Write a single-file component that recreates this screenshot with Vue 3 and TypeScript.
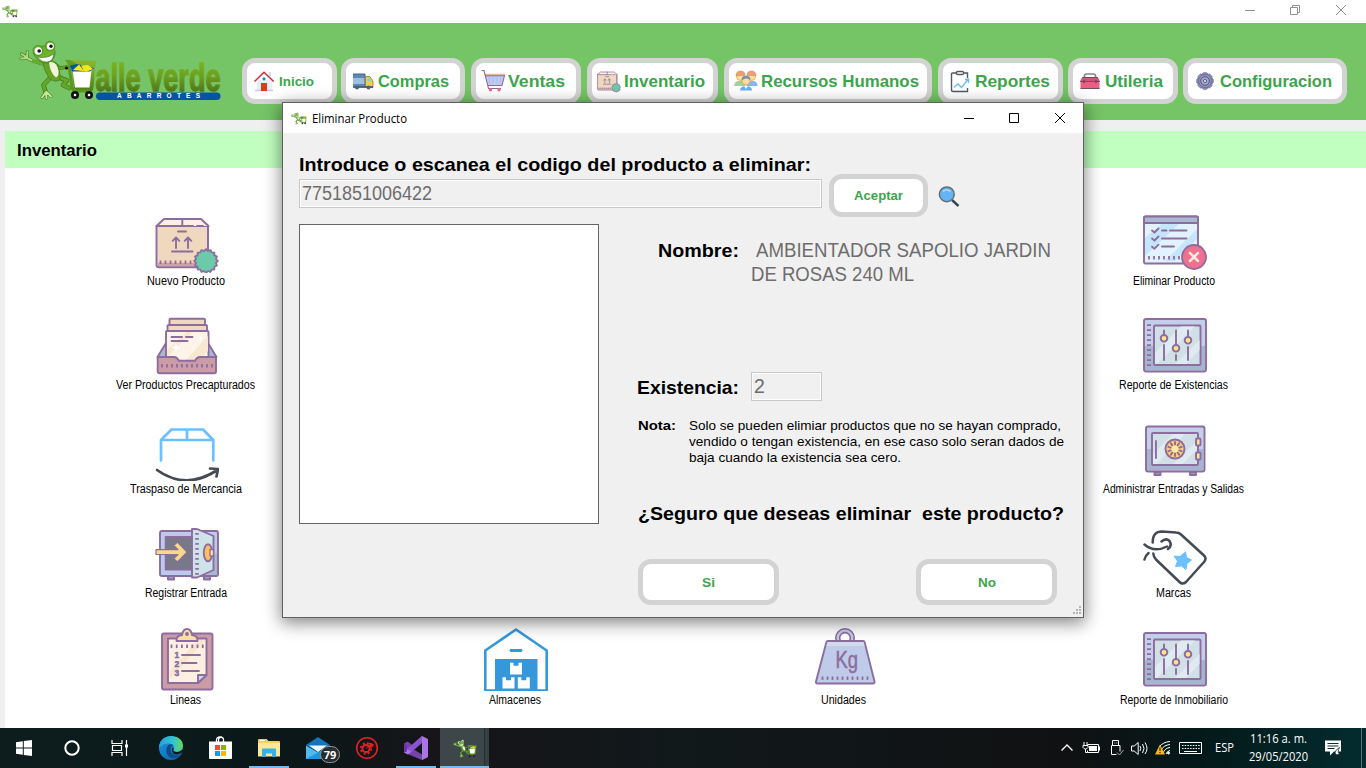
<script setup lang="ts">
interface NavItem { label: string; icon: string; width: number; gap: number; text: number; small?: boolean }
interface Tile { label: string; icon: string; row: number; col: number; text: number }

// Condenses or expands a line's letters so that it fills the given width in pixels.
const vFit = {
  mounted(el: HTMLElement, binding: { value: number }) {
    el.style.display = 'inline-block'
    const natural = el.getBoundingClientRect().width
    if (!natural) return
    el.style.transformOrigin = '0 50%'
    el.style.transform = `scaleX(${binding.value / natural})`
    el.style.marginRight = `${binding.value - natural}px`
  },
}

const P = '#8d6c9f'
const ticks = (x: number, y: number, n: number, step: number, h = 3.6) =>
  Array.from({ length: n }, (_, i) => `<path d="M${x + i * step} ${y}v${h}" stroke="${P}" stroke-width="1.8"/>`).join('')
const open = `<g stroke="${P}" stroke-width="1.9" stroke-linecap="round" stroke-linejoin="round" fill="none">`
const scallop = Array.from({ length: 32 }, (_, i) => {
  const r = i % 2 ? 10.2 : 11.8
  const a = (i * Math.PI) / 16
  return `${(51 + r * Math.cos(a)).toFixed(1)},${(52 + r * Math.sin(a)).toFixed(1)}`
}).join(' ')
const rays = Array.from({ length: 10 }, (_, i) => `<path d="M32 27.5v-2.500" transform="rotate(${i * 36} 32 32)"/>`).join('')
const teeth = Array.from({ length: 8 }, (_, i) => `<rect x="9.600" y="3.800" width="4.800" height="4.500" rx="1" transform="rotate(${i * 45} 12 12)"/>`).join('')

const icons: Record<string, string> = {
  box: `${open}<path d="M1.500 17V56q0 2.200 2.200 2.200H51q2 0 2-2V17z" fill="#efd8be"/><path d="M2.500 53.800H52V57H2.500z" fill="#d0a2a4" stroke="none"/><path d="M1.500 17 9 10H46l7.500 7z" fill="#fdf0e2" stroke="none"/><path d="M1.500 17 9 10H46l7.500 7M1.500 17H38M42 17h6M27.300 10v7M53 17v23M23 22.500h8M17 42.500h20.500M21 39V28.500l-3.300 3.300M21 28.500l3.300 3.300M33 39V28.500l-3.300 3.300M33 28.500l3.300 3.300"/></g>${ticks(5.500, 51.500, 7, 5)}<polygon points="${scallop}" fill="#6cc9a9" stroke="${P}" stroke-width="1.800"/>`,
  tray: `${open}<path d="M2.500 44 11 30V44zM61.500 44 53 30V44z" fill="#a9b9d3"/><path d="M14.500 12V6.800q0-1 1-1H49q1 0 1 1V12z" fill="#efd8be"/><path d="M12.500 18V13q0-1 1-1H51q1 0 1 1v5z" fill="#efd8be"/><path d="M11 48V19q0-1 1-1H52.500q1 0 1 1V48z" fill="#fdf3e8"/><path d="M31 47 53 23V38L44 47zM12 44V37L32 19h5z" fill="#f8e7d2" stroke="none"/><path d="M21 30l1.300 3.200 3.200 1.300-3.200 1.300L21 39l-1.300-3.200-3.200-1.300 3.200-1.300zM45.500 23l.8 2 2 .8-2 .8-.8 2-.8-2-2-.8 2-.8z" fill="#fff" stroke="none"/><path d="M2.700 44H19q3 0 5 3.800H40q2-3.800 5-3.800H61V58.500q0 1.800-1.800 1.800H4.500q-1.800 0-1.800-1.800z" fill="#cb9ca5"/><path d="M16.500 24h10.500M31 24h6.500M16.500 28h16"/></g>${ticks(7, 51, 11, 5)}`,
  transfer: `<g fill="none" stroke-width="2.700" stroke-linecap="round" stroke-linejoin="round"><path d="M6 43.500V23L16.500 12.500H48L58.300 23V43.500M6 23H58.300M32 13V23" stroke="#6cc0ff"/><path d="M2 53Q31 73.500 61.500 53.500M55 51.500 63 52 61.500 59.500" stroke="#444b54"/></g>`,
  entry: `${open}<path d="M13 55h6v3.500h-6zM49 55h6v3.500h-6z" fill="#8fa3bd"/><rect x="5" y="10" width="58" height="45" rx="2" fill="#bccbe9"/><path d="M59 34 62 32V54H45z" fill="#a6b8d2" stroke="none"/><rect x="10.700" y="16" width="29" height="32.500" fill="#777987"/><path d="M37 8h5L58.500 15V49L42 56.500h-5z" fill="#cfe2e9"/><ellipse cx="53" cy="31.700" rx="4.200" ry="8.500" fill="#ffc05f"/><rect x="55" y="28.500" width="3.500" height="6.500" fill="#ffe6a0" stroke-width="1.300"/><path d="M1 28.700H23L18.800 24.500 22.500 21 32 31.200 22.500 41 18.800 37.600 23 33.500H1z" fill="#f8d98a" stroke-width="1.200"/></g><path d="M42 12v42" stroke="${P}" stroke-width="3.500" stroke-dasharray="1.800 3.200"/>`,
  list: `${open}<rect x="7" y="6.500" width="50.500" height="56" rx="2" fill="#cb9ca5"/><path d="M13 11.500H51.500V48L43 56H13z" fill="#fdf0e2"/><path d="M14 45 43 13h7L15 52z" fill="#f8e5cf" stroke="none"/><path d="M43 56V48h8.500z" fill="#bdddf8"/><path d="M21.500 14q-.5-5.500 5.500-6 1-6 5-6t5 6q6 .5 5.500 6z" fill="#f9dfa0"/><circle cx="32" cy="7" r="1" fill="${P}"/><path d="M27 28H45M27 36H41.500M27 44H44"/></g>${ticks(16.500, 17.500, 7, 5.200)}<g fill="${P}" stroke="${P}" stroke-width=".5" font-family="Liberation Sans" font-weight="bold" font-size="8.500"><text x="19.500" y="30.800">1</text><text x="19.500" y="39.500">2</text><text x="19.500" y="48.500">3</text></g>`,
  remove: `${open}<rect x="1" y="7.500" width="54" height="47" rx="1.500" fill="#e2f3ff"/><path d="M2 29 20 14H37L2 47zM22 52 54 20v10L32 52z" fill="#c5e5fa" stroke="none"/><path d="M1 14V9q0-1.500 1.500-1.500h51q1.500 0 1.500 1.500v5z" fill="#a9b9cf"/><path d="M9 21.500l2.500 2 4-4M9 29.500l2.500 2 4-4M9 37.700l2.500 2 4-4M19 21.500h4.500M27 21.500H43.500M19 29.500H43.500M19 37.500H31"/></g>${ticks(6, 47, 7, 5)}<circle cx="51" cy="48" r="12" fill="#f0708f" stroke="${P}" stroke-width="1.800"/><path d="M47 44l8 8M55 44l-8 8" stroke="#ffe9dc" stroke-width="2.500" stroke-linecap="round"/>`,
  sliders: `${open}<rect x="1" y="6" width="62" height="52.500" rx="2" fill="#c3cfe9"/><path d="M2 33H62V57H2z" fill="#a6b5ce" stroke="none"/><rect x="11" y="12.500" width="46.500" height="39.500" rx="1" fill="#d1dfe7"/><path d="M12 40 38 13.500H52L14 51h-2zM32 51 56.500 27V37L43 51z" fill="#dfebf1" stroke="none"/><path d="M21 17.500v4M21 32V47M33 17.500V31M33 42v5M45 17.500v6M45 34V47"/><circle cx="21" cy="25.300" r="3.300" fill="#ffe18b"/><circle cx="33" cy="35.300" r="3.300" fill="#ffe18b"/><circle cx="45" cy="27.300" r="3.300" fill="#ffe18b"/></g><path d="M6 11.200V53.500" stroke="${P}" stroke-width="4" stroke-dasharray="1.900 3.100"/>`,
  safe: `${open}<path d="M11.500 55h6v3h-6zM47 55h6v3h-6z" fill="#8fa3bd"/><rect x="3" y="9.500" width="58.500" height="45" rx="2" fill="#c3cfe9"/><path d="M4 32H60V53H4z" fill="#a6b5ce" stroke="none"/><rect x="9" y="16" width="46" height="32" rx="1" fill="#d1dfe7"/><path d="M10 37 30 17H42L14 47h-4zM30 47 54 24v8L40 47z" fill="#dfebf1" stroke="none"/><path d="M13 24V41"/><circle cx="32" cy="32" r="9.500" fill="#ffcd72"/><circle cx="32" cy="32" r="4" fill="#ffe7a0" stroke="none"/>${rays}<rect x="53" y="21.500" width="4.500" height="7" rx="1" fill="#ffe18b"/><rect x="53" y="35.500" width="4.500" height="7" rx="1" fill="#ffe18b"/></g>`,
  tag: `<g fill="none" stroke="#444b54" stroke-width="2.500" stroke-linecap="round" stroke-linejoin="round"><path d="M9.700 21.500Q9.500 10.500 19 10.500L33 11.500Q36 11.500 38 13.500L61 34.500Q64 37.500 61 41L43 61Q39.500 64 36.500 61L13 38.500Q10.500 36 10.300 32.500"/><path d="M1.500 23.500Q11 32 24 25.500M18.500 20.500Q23 16.500 26.500 20 29.500 25 25 28M5.500 32Q2.500 34.500 1.500 38.500"/></g><path d="M42.500 31 43.500 36.500 48.500 39 44 42.500 43 48.500 38.500 45 32.500 45.500 34.500 40 31 35 37 35.500z" fill="#6cc0ff" stroke="#6cc0ff" stroke-linejoin="round"/>`,
  warehouse: `<path d="M1.300 23.500 32 2.500 62.700 23.500V63.500H1.300z" fill="#fff" stroke="#3498db" stroke-width="2.600" stroke-linejoin="round"/><path d="M27 23.500H37" stroke="#3498db" stroke-width="2.800" stroke-linecap="round"/><path d="M11 32H53.500V64H11z" fill="#3498db"/><path d="M26 35.800h3.500v3h5v-3H38V47.500H26zM18.500 50.200H22v3h5v-3h3.500V61.500h-12zM33.800 50.200h3.500v3h5v-3h3.500V61.500h-12z" fill="#fff"/>`,
  weight: `${open}<circle cx="32" cy="11" r="7.300" stroke-width="5.500"/><circle cx="32" cy="11" r="7.300" stroke="#c0cce8" stroke-width="2.300"/><path d="M15 14H50q1.300 0 1.700 1.500L61.500 54.500q.5 2-1.500 2H4.500q-2 0-1.500-2L13.300 15.500Q13.700 14 15 14z" fill="#bfcbe8"/><path d="M14.500 15h36l1 4h-38z" fill="#d0dcec" stroke="none"/></g>${ticks(9.500, 49.500, 10, 5, 3.400)}<text x="22.500" y="41" font-family="Liberation Sans" font-size="24" textLength="22.500" lengthAdjust="spacingAndGlyphs" fill="${P}" stroke="${P}" stroke-width=".5">Kg</text>`,
  house: `<path d="M5 11h15v11H5z" fill="#ececf7"/><path d="M3 21.500h18" stroke="#c8cce8" stroke-width="1.600"/><path d="M16.500 3h2.500v5l-2.500-2z" fill="#d7dcf0"/><path d="M2.500 12.500 12 3.200 21.700 12.500" fill="none" stroke="#c92d37" stroke-width="1.500"/><path d="M9 14h6v8H9z" fill="#dd3b14"/><circle cx="12" cy="9.800" r="1.600" fill="#2783be"/>`,
  truck: `<path d="M2 5h12v13H2z" fill="#9cc0dd"/><path d="M2 5h12v4H2zM2 15h12v3H2z" fill="#5d88b3"/><path d="M2 5h12v13" fill="none" stroke="#4d6586"/><path d="M14.500 7.500h4.300L22 12v6.500h-7.500z" fill="#f2cf48" stroke="#8b743d" stroke-width=".8"/><path d="M16.500 9h2l2 3.500h-4z" fill="#89cdd6"/><path d="M2 18h20" stroke="#4b5c79" stroke-width="1.800"/><circle cx="6" cy="18.500" r="2" fill="#51617b"/><circle cx="17.500" cy="18.500" r="2" fill="#51617b"/>`,
  cart: `<path d="M4.500 6h19l-2.500 10.500H6.800z" fill="#bdccf0"/><path d="M3.500 4.800h20.500v2H4z" fill="#e2bd97"/><path d="M.5 1.500h2.500L7.500 19.500H20M4 6.800h19.500L21 16.500H6.700" fill="none" stroke="${P}" stroke-width="1.100"/><path d="M8 8l1 7M12 8v7M16 8v7M20 8l-1 7" stroke="#a9b6df" stroke-width=".8"/><circle cx="9.500" cy="20.800" r="1.700" fill="#f06786"/><circle cx="18" cy="20.800" r="1.700" fill="#f06786"/>`,
  people: `<path d="M.5 17q0-5 5-5t6 5zM23.500 17q0-5-5-5t-6 5z" fill="#8ab4ed"/><path d="M.5 17q0-5 5-5t5 5z" fill="#a6cf9c"/><g stroke="#b88850" stroke-width=".5"><circle cx="6.500" cy="7.500" r="4" fill="#ffdf95"/><circle cx="17.500" cy="7.500" r="4" fill="#ffdf95"/><path d="M2 7q0-5 4.500-5t4.500 4zM13 6q0-4 4.500-4t4.500 5z" fill="#ef9c79"/><circle cx="12" cy="12" r="4" fill="#ffdf95"/></g><path d="M7.500 11.500q0-5 4.500-5t4.500 5q-2-2-4-2t-5 2z" fill="#7f91a6"/><path d="M6 21.500q0-4.500 6-4.500t6 4.500z" fill="#69aff0"/><path d="M10 17h4l-2 3z" fill="#fff"/>`,
  report: `<g fill="none" stroke="#525866" stroke-width="1.400"><path d="M9 4H4.500Q3.500 4 3.500 5V21q0 1.500 1.500 1.500H19.500V19M15 4h4.500V9"/><rect x="8.500" y="2.500" width="7" height="3" rx="1"/><path d="M6 18.500 10 15l3.500 3.500L20 10.500M17 10.500l3.500-.5V14" stroke="#67bdfa"/></g>`,
  tools: `<path d="M6.500 8.500V7q0-2 2-2h7q2 0 2 2v1.500" fill="none" stroke="#7e8592" stroke-width="1.700"/><path d="M4 8.500h16l2 4H2z" fill="#d35572"/><path d="M2.500 12h19v7.500h-19z" fill="#f15d82"/><path d="M2.500 19.500h19M2 12.500h20M4 8.500h16" stroke="#704d69"/><path d="M5 11h2v3H5zM17 11h2v3h-2z" fill="#764c69"/>`,
  gear: `<g fill="#9395c1" stroke="#62648b" stroke-width=".8">${teeth}<circle cx="12" cy="12" r="6.500"/></g><circle cx="12" cy="12" r="4.300" fill="#a5a7d0" stroke="#54577c"/><circle cx="12" cy="12" r="1.500" fill="#fff" stroke="#54577c"/>`,
}

const nav: NavItem[] = [
  { label: 'Inicio', icon: 'house', width: 95, gap: 0, text: 35, small: true },
  { label: 'Compras', icon: 'truck', width: 124, gap: 4, text: 71 },
  { label: 'Ventas', icon: 'cart', width: 110, gap: 6, text: 57 },
  { label: 'Inventario', icon: 'box', width: 131, gap: 6, text: 81 },
  { label: 'Recursos Humanos', icon: 'people', width: 208, gap: 6, text: 158 },
  { label: 'Reportes', icon: 'report', width: 125, gap: 6, text: 75 },
  { label: 'Utileria', icon: 'tools', width: 110, gap: 5, text: 58 },
  { label: 'Configuracion', icon: 'gear', width: 164, gap: 5, text: 112 },
]

const tiles: Tile[] = [
  { label: 'Nuevo Producto', icon: 'box', row: 1, col: 1, text: 78 },
  { label: 'Eliminar Producto', icon: 'remove', row: 1, col: 4, text: 82 },
  { label: 'Ver Productos Precapturados', icon: 'tray', row: 2, col: 1, text: 139 },
  { label: 'Reporte de Existencias', icon: 'sliders', row: 2, col: 4, text: 109 },
  { label: 'Traspaso de Mercancia', icon: 'transfer', row: 3, col: 1, text: 112 },
  { label: 'Administrar Entradas y Salidas', icon: 'safe', row: 3, col: 4, text: 141 },
  { label: 'Registrar Entrada', icon: 'entry', row: 4, col: 1, text: 82 },
  { label: 'Marcas', icon: 'tag', row: 4, col: 4, text: 35 },
  { label: 'Lineas', icon: 'list', row: 5, col: 1, text: 31 },
  { label: 'Almacenes', icon: 'warehouse', row: 5, col: 2, text: 52 },
  { label: 'Unidades', icon: 'weight', row: 5, col: 3, text: 45 },
  { label: 'Reporte de Inmobiliario', icon: 'sliders', row: 5, col: 4, text: 108 },
]

const note = [
  { text: 'Solo se pueden elimiar productos que no se hayan comprado,', width: 372 },
  { text: 'vendido o tengan existencia, en ese caso solo seran dados de', width: 375 },
  { text: 'baja cuando la existencia sea cero.', width: 212 },
]
</script>

<template>
  <div class="screen">
    <svg class="defs" width="0" height="0">
      <defs>
        <linearGradient id="leaf" x1="0" y1="0" x2="0" y2="1">
          <stop offset="0" stop-color="#8db52c" /><stop offset=".35" stop-color="#78ad20" /><stop offset="1" stop-color="#4d7d1c" />
        </linearGradient>
        <linearGradient id="brand" gradientUnits="userSpaceOnUse" x1="0" y1="61" x2="0" y2="92">
          <stop offset="0" stop-color="#7bb51f" /><stop offset=".5" stop-color="#6c9f1e" /><stop offset="1" stop-color="#4d761b" />
        </linearGradient>
        <symbol id="frog" viewBox="18 40 80 61">
          <g fill="none" stroke="#3d7a1c" stroke-linecap="round" stroke-linejoin="round">
            <path d="M43 64 33 61 25 57M21 58.500 26 58M21.500 54 26.500 57M27.500 52 27 57" stroke-width="3.200" />
            <path d="M43 64 33 61 25 57M21 58.500 26 58M21.500 54 26.500 57M27.500 52 27 57" stroke="#b4d880" stroke-width="2" />
            <path d="M44 64 33 61" stroke="#69ad28" stroke-width="2.600" />
            <path d="M51 77 43.500 85 46 93M58 77 67 80.500 63 85 69 88" stroke-width="4.600" />
            <path d="M51 77 43.500 85 46 93M58 77 67 80.500 63 85 69 88" stroke="#67a529" stroke-width="3.300" />
            <path d="M46 92 42 97.500M46 93 46.500 98M46.500 92 51 96.500" stroke-width="3" />
            <path d="M46 92 42 97.500M46 93 46.500 98M46.500 92 51 96.500" stroke="#cbe59b" stroke-width="2" />
            <path d="M55 64 60 68 67 67" stroke-width="3.500" />
            <path d="M55 64 60 68 67 67" stroke="#69a52b" stroke-width="2.200" />
          </g>
          <path d="M43 61Q50 58 56 63 61 70 60 80 54 83 49 78 43 69 43 61z" fill="#65a326" stroke="#32651a" stroke-width=".5" />
          <path d="M49 62Q57 61 58.500 71 59 76 56 77.500 50 73 49 62z" fill="#f2f4d8" />
          <path d="M33 53Q37 45 45 46 52 42 55 51 56 59 48 63 38 64 33 53z" fill="#6db42a" stroke="#32651a" stroke-width=".5" />
          <circle cx="38" cy="50.500" r="5" fill="#6db42a" stroke="#3b711b" stroke-width=".5" /><circle cx="50" cy="46" r="4.800" fill="#6db42a" stroke="#3b711b" stroke-width=".5" />
          <circle cx="38.300" cy="51" r="3.700" fill="#fff" /><circle cx="50.300" cy="46.300" r="3.500" fill="#fff" />
          <circle cx="39.200" cy="51" r="1.800" fill="#111" /><circle cx="51" cy="46.300" r="1.700" fill="#111" />
          <path d="M37.500 57Q47 59 53.500 54 53.500 61.500 46.500 62 41 62 37.500 57z" fill="#fff" stroke="#365b20" stroke-width=".5" />
          <path d="M65 59.800Q78 60 77 70L79 90H88L90 88 92 70Q93 61 96 61 86 60 84.500 68H72Q73 90 76 91H92Q94 91 94.500 72L96 61" fill="url(#leaf)" />
          <path d="M65 59.800Q77 60 78 68H69Q68 63 65 59.800z" fill="#649c24" />
          <path d="M69 66 72 87Q72.500 91 77 91H90" fill="none" stroke="#5b971b" stroke-width="3" />
          <path d="M72.500 70H91.500L89.500 87.500H75z" fill="#fff" />
          <path d="M70 65.500 77 64 94 68 90 71.500H72z" fill="#0754a5" /><path d="M73 70 79 64.500 84 71 81 65.500 88 65 93 69 87 71.500z" fill="#f8e61c" />
          <circle cx="66.500" cy="68" r="1.600" fill="#111" /><circle cx="75" cy="95" r="4" fill="#111" /><circle cx="89" cy="95" r="4" fill="#111" />
          <circle cx="75" cy="95" r="1.300" fill="#fff" /><circle cx="89" cy="95" r="1.300" fill="#fff" />
        </symbol>
      </defs>
    </svg>

    <div class="titlebar">
      <svg class="mini" width="16" height="13"><use href="#frog" /></svg>
      <svg class="controls" width="138" height="23" fill="none" stroke="#929292"><path d="M17 10.500h10M62.500 7.500h7v7h-7zM64.500 7.500v-2h7v7h-2M108 5l10 10M118 5l-10 10" /></svg>
    </div>

    <header class="header">
      <svg class="logo" width="242" height="97" viewBox="0 23 242 97">
        <text x="95.500" y="91" class="brand" textLength="125" lengthAdjust="spacingAndGlyphs">alle verde</text>
        <use href="#frog" x="18" y="40" width="80" height="61" />
        <rect x="96" y="92.500" width="124.500" height="7.500" rx="3.700" fill="#0754a5" />
        <text x="117" y="98.300" class="brand-sub" textLength="83">ABARROTES</text>
      </svg>
      <nav class="nav">
        <button v-for="item in nav" :key="item.label" class="pill nav-item" :class="{ small: item.small }" :style="{ width: item.width + 'px', marginLeft: item.gap + 'px' }">
          <svg width="24" height="24" :viewBox="item.icon === 'box' ? '0 2 64 64' : '0 0 24 24'" v-html="icons[item.icon]" />
          <span v-fit="item.text">{{ item.label }}</span>
        </button>
      </nav>
    </header>

    <main class="main">
      <h1 class="section"><span v-fit="80">Inventario</span></h1>
      <div class="tiles">
        <div v-for="tile in tiles" :key="tile.label" class="tile" :class="{ last: tile.row === 5 }" :style="{ gridRow: tile.row, gridColumn: tile.col }">
          <svg width="64" height="64" viewBox="0 0 64 64" v-html="icons[tile.icon]" />
          <div><span v-fit="tile.text">{{ tile.label }}</span></div>
        </div>
      </div>
    </main>

    <section class="dialog">
      <div class="dialog-title">
        <svg class="mini" width="16" height="13"><use href="#frog" /></svg>
        <span v-fit="95">Eliminar Producto</span>
        <svg class="controls" width="124" height="30" fill="none" stroke="#000"><path d="M5 15.500h10M50.500 10.500h9v9h-9zM96 10l10 10M106 10l-10 10" /></svg>
      </div>
      <div class="dialog-body">
        <div class="lookup">
          <div class="field">
            <label class="strong"><span v-fit="512">Introduce o escanea el codigo del producto a eliminar:</span></label>
            <div class="input"><span v-fit="130">7751851006422</span></div>
          </div>
          <button class="pill accept"><span v-fit="49">Aceptar</span></button>
          <svg class="search" width="24" height="24" viewBox="0 0 24 24"><path d="M15 15 21.500 21" stroke="#37474f" stroke-width="2.400" /><circle cx="9.800" cy="9.300" r="7.400" fill="#64b5f6" stroke="#616d78" stroke-width="1.500" /><path d="M6 6.500Q9.500 3.500 13.500 6.500" fill="none" stroke="#bbdefb" stroke-width="1.500" /></svg>
        </div>
        <div class="content">
          <div class="listbox"></div>
          <div class="details">
            <div class="row name">
              <label class="strong"><span v-fit="81">Nombre:</span></label>
              <div class="value"><div class="indent"><span v-fit="295">AMBIENTADOR SAPOLIO JARDIN</span></div><div><span v-fit="163">DE ROSAS 240 ML</span></div></div>
            </div>
            <div class="row stock">
              <label class="strong"><span v-fit="102">Existencia:</span></label>
              <div class="input short">2</div>
            </div>
            <div class="row note">
              <b><span v-fit="38">Nota:</span></b>
              <div><div v-for="line in note" :key="line.text"><span v-fit="line.width">{{ line.text }}</span></div></div>
            </div>
            <p class="strong question"><span v-fit="426">¿Seguro que deseas eliminar&nbsp; este producto?</span></p>
            <div class="actions">
              <button class="pill choice"><span v-fit="13">Si</span></button>
              <button class="pill choice"><span v-fit="18">No</span></button>
            </div>
          </div>
        </div>
        <svg class="grip" width="10" height="10" fill="#b5b5b5"><path d="M7 0h2v2H7zM4 3h2v2H4zM7 3h2v2H7zM1 6h2v2H1zM4 6h2v2H4zM7 6h2v2H7z" /></svg>
      </div>
    </section>

    <footer class="taskbar">
      <div class="task sys"><svg width="24" height="24" fill="#fff"><path d="M4 6.300 10.800 5.300V11.500H4zM11.800 5.100 20 4V11.500H11.800zM4 12.500H10.800V18.800L4 17.800zM11.800 12.500H20V20L11.800 18.900z" /></svg></div>
      <div class="task sys"><svg width="24" height="24"><circle cx="12" cy="12" r="6.700" fill="none" stroke="#fff" stroke-width="2" /></svg></div>
      <div class="task sys"><svg width="24" height="24" fill="none" stroke="#fff" stroke-width="1.200"><path d="M4 4v3.500h10V4M4 20v-3.500h10V20M4.500 9.500h9v5h-9zM18.500 4V20" /><path d="M17 8.500h3v3h-3z" fill="#fff" stroke="none" /></svg></div>
      <div class="task first">
        <svg width="26" height="26" viewBox="0 0 26 26"><defs><linearGradient id="e1" x1="0" x2="1"><stop stop-color="#249fe0" /><stop offset=".6" stop-color="#34c5cf" /><stop offset="1" stop-color="#66d756" /></linearGradient><linearGradient id="e2" x1="0" y1="0" x2="1" y2="1"><stop stop-color="#1b9de2" /><stop offset="1" stop-color="#0c59a4" /></linearGradient></defs><circle cx="13" cy="13" r="12" fill="url(#e2)" /><path d="M1 11Q3 1 13.500 1 25 2 25 11.500 24 17 18 17 14 17 15.500 14 17 9 11 8.500 5 8 1 13z" fill="url(#e1)" /><path d="M10.500 10Q7 14 9 19 12 24.500 19 22.500L22.800 20Q15 22 12.700 16 11.500 12 15.500 10 12 8.500 10.500 10z" fill="#104a87" /><path d="M15.200 12Q12.500 14.500 15.500 18.500 19 21 24 17.500L27 21V13L24 15Q20 18 16 16.300 14.800 15 15.800 14z" fill="#101a1c" /></svg>
      </div>
      <div class="task"><svg width="26" height="26"><path d="M9.500 7.500V5q0-3 3.500-3t3.500 3v2.500M11.500 7V4.500Q12 2 14.500 2" fill="none" stroke="#fff" stroke-width="1.300" /><path d="M2 6.500h23V23q0 1-1 1H3q-1 0-1-1z" fill="#fff" /><path d="M8 10h5v5H8z" fill="#f25022" /><path d="M14 10h5v5h-5z" fill="#7fba00" /><path d="M8 16h5v5H8z" fill="#00a4ef" /><path d="M14 16h5v5h-5z" fill="#ffb900" /></svg></div>
      <div class="task running"><svg width="26" height="26"><path d="M2 5q0-1 1-1h7.500l2 2H23q1 0 1 1v14H2z" fill="#f8ce5b" /><path d="M2 8h22v13.500H2z" fill="#ffe79a" /><path d="M4 5.500h5" stroke="#fff" /><path d="M6 14.500q0-1 1-1h12q1 0 1 1V22h-4v-3.500h-6V22H6z" fill="#37b1e8" /></svg></div>
      <div class="task"><svg width="26" height="26"><path d="M1 10 13 2 25 10 13 17z" fill="#1475bd" /><path d="M4 10.500h18L13 17z" fill="#ecf7ff" /><path d="M1 10.500 13 17.500 25 10.500V24H1z" fill="#4bbcf3" /><path d="M1 24 13 17.500 25 10.500V24z" fill="#2098dc" /></svg><span class="badge">79</span></div>
      <div class="task"><svg width="26" height="26" fill="none" stroke="#e32028"><circle cx="13" cy="13" r="10.300" stroke-width="1.600" /><circle cx="12" cy="13.500" r="3.600" stroke-width="2" /><circle cx="12" cy="13.500" r="5.300" stroke-width="1.800" stroke-dasharray="2.200 2" /><path d="M12 13.500 17 9M15.500 8l4 1.500-2 3z" fill="#e32028" /></svg></div>
      <div class="task running"><svg width="26" height="26"><path d="M1 8.500 4.500 6.500 25 22 19 25 1 17.500z" fill="#864bc3" opacity=".85" /><path d="M19 1 25 4V22L19 25V8L5 19.500 1 17.500 4.500 14z" fill="#aa76e5" /><path d="M1 8.500 4 10V16.500L1 17.500z" fill="#6c35a7" /><path d="M8.500 13 19 6.500v13z" fill="#101719" /><path d="M19 1 4.500 14 8.500 17 19 8z" fill="#8c52cf" /></svg></div>
      <div class="task running active"><svg width="24" height="19"><use href="#frog" /></svg></div>

      <div class="tray">
        <svg width="24" height="40" fill="none" stroke="#fff" stroke-width="1.400"><path d="M6.500 22.500 12 17l5.500 5.500" /></svg>
        <svg width="24" height="40" fill="none" stroke="#fff"><path d="M8.500 16.500h11v8h-11v-2M20.500 18.500v4M5 14v3M8 14v3M4 17.500h5v2q-1 1.500-2.500 1.500T4 19.500zM6.500 21v3.500h2" /><path d="M10 18h8v5h-8z" fill="#fff" stroke="none" /></svg>
        <svg width="24" height="40" fill="none" stroke="#fff"><path d="M9.500 17.500v-5h6v5M8.500 17.500h8.500v6M8.500 17.500v9h5M11.500 15h.8M13.500 15h.8" /><path d="M14 24.500l2.500 2.500 4-5" stroke="#a7a7a7" /></svg>
        <svg width="24" height="40" fill="none" stroke="#fff"><path d="M4.500 18h2.700l4-3.500v12l-4-3.500H4.500zM13 18q1.500 2.500 0 5M15.500 16q3 4.500 0 9M18 14.500q4 6 0 11.500" /></svg>
        <svg width="24" height="40" fill="none" stroke="#fff"><path d="M8 19Q12 14 19 13.500M10 22Q13 17 19 16.500M12 25Q14 20 19 19.500M15 26Q16 23 19 22.500" /><circle cx="17.500" cy="25" r="1" fill="#fff" /><path d="M9 16.500 14 26.500H4z" fill="#ffb900" stroke="none" /><path d="M9 19.500v3.500M9 24v1.200" stroke="#000" /></svg>
        <svg width="32" height="40" fill="none" stroke="#fff"><path d="M4.500 14.500h22v11h-22zM9 23.500h13" /><path d="M7 17.500h18M7 20.500h18" stroke-dasharray="1.500 1.200" /></svg>
        <span class="lang"><span v-fit="19">ESP</span></span>
        <div class="clock"><div><span v-fit="57">11:16 a. m.</span></div><div><span v-fit="59">29/05/2020</span></div></div>
        <svg width="36" height="40"><path d="M10 12.500h16v11H19l-4 4v-4h-5z" fill="#fff" /><path d="M12.500 15.500h11M12.500 18h11M12.500 20.500h7" stroke="#12302f" /><path d="M20 25q0-3 4.500-5.500Q22 24 24.500 26 21 28 20 25z" fill="#fff" stroke="#12302f" stroke-width=".8" /></svg>
        <div class="peek"></div>
      </div>
    </footer>
  </div>
</template>

<style>
html, body { margin: 0; overflow: hidden; }
</style>
<style scoped>
.screen { position: relative; width: 1366px; height: 768px; overflow: hidden; display: flex; flex-direction: column; background: #efefef; font-family: "Liberation Sans", Arial, sans-serif; color: #000; }
.screen span { white-space: pre; }
svg { display: block; flex: none; }
.defs { position: absolute; }
.titlebar { height: 23px; flex: none; background: #fff; display: flex; align-items: flex-start; }
.titlebar .mini { margin: 5px 0 0 2px; }
.controls { margin-left: auto; }
.header { height: 97px; flex: none; background: #75c466; display: flex; }
.brand { font: bold 39px "Liberation Sans", Arial, sans-serif; fill: url(#brand); stroke: url(#brand); stroke-width: 1.300px; }
.brand-sub { font: bold 6.500px "Liberation Sans", Arial, sans-serif; fill: #fff; }
.nav { display: flex; padding-top: 35px; }
.pill { box-sizing: border-box; border: 5px solid #d3d3d3; border-radius: 13px; background: #fff; color: #3ba54a; font: bold 13px "Liberation Sans", Arial, sans-serif; padding: 0; }
.nav-item { height: 46px; display: flex; align-items: center; padding-left: 5px; font-size: 16.500px; gap: 3px; }
.nav-item span { padding-top: 1px; }
.nav-item.small { font-size: 13px; }
.main { flex: 1; margin: 11px 0 0 5px; background: #fff; }
.section { margin: 0; height: 37px; line-height: 38px; padding-left: 12px; background: #c1ffc0; font-size: 16.500px; font-weight: bold; }
.tiles { display: grid; grid-template-columns: 329px 329px 329px 331px; grid-template-rows: repeat(3, 104px) 106px 101px; padding: 41px 0 0 16px; }
.tile { display: flex; flex-direction: column; align-items: center; font-size: 12px; line-height: 16px; }
.tile svg { margin-left: 3px; }
.last > div { padding-top: 1px; }
.dialog { position: absolute; left: 282px; top: 102px; width: 802px; height: 516px; box-sizing: border-box; border: 1px solid #5f6360; background: #f0f0f0; box-shadow: 0 4px 16px 1px rgba(0, 0, 0, .48); }
.dialog-title { height: 30px; background: #fff; display: flex; align-items: center; font: 12px "Open Sans", "Noto Sans", sans-serif; }
.dialog-title .mini { margin: 0 5px 0 8px; }
.dialog-body { padding: 22px 0 0 16px; }
.lookup { display: flex; height: 69px; align-items: flex-start; }
.field { width: 523px; }
.strong { font-size: 19px; font-weight: bold; line-height: 20px; }
.field .strong { display: block; height: 24px; }
.input { box-sizing: border-box; height: 29px; border: 1px solid #c8c8c8; box-shadow: inset 0 0 0 1px #fff; padding-left: 2px; font-size: 19.500px; line-height: 26px; color: #6d6d6d; }
.accept { width: 99px; height: 43px; margin: 19px 0 0 7px; }
.search { margin: 30px 0 0 9px; }
.content { display: flex; }
.listbox { box-sizing: border-box; width: 300px; height: 300px; border: 1px solid #646464; background: #fff; }
.details { margin-left: 39px; padding-top: 14px; }
.row { display: flex; }
.row > label { width: 101px; margin-right: 12px; display: flex; justify-content: flex-end; }
.name { height: 134px; }
.name > label { line-height: 25px; }
.value { font-size: 19.500px; line-height: 24px; color: #6d6d6d; }
.indent { padding-left: 5px; }
.stock { height: 46px; }
.stock > label { line-height: 31px; }
.short { width: 71px; }
.note { height: 86px; font-size: 13.300px; line-height: 16px; }
.note b { width: 51px; font-size: 13.300px; }
.question { margin: 0; height: 55px; }
.actions { display: flex; gap: 137px; }
.choice { width: 141px; height: 46px; }
.grip { position: absolute; right: 1px; bottom: 1px; }
.taskbar { height: 40px; flex: none; display: flex; background: linear-gradient(90deg, #0d1d1d 0, #0b1718 22%, #171519 32%, #11191b 50%, #101112 78%, #04191a 88%, #032c2f 100%); color: #fff; }
.task { position: relative; box-sizing: border-box; width: 49px; height: 40px; display: flex; align-items: center; justify-content: center; }
.sys { width: 48px; }
.first { margin-left: 2px; }
.running::after { content: ""; position: absolute; left: 5px; right: 4px; bottom: 0; height: 2px; background: #76b9ed; }
.active { background: linear-gradient(90deg, #3d4648 0 44px, #252e30 44px 45px, #354043 45px); }
.active::after { left: 0; right: 0; }
.badge { position: absolute; left: 27px; top: 18px; box-sizing: border-box; width: 20px; height: 17px; border: 1px solid #93999a; border-radius: 9px; background: #272d30; text-align: center; font: bold 11px/15px "Open Sans", sans-serif; }
.tray { margin-left: auto; display: flex; font: 12px "Open Sans", "Noto Sans", sans-serif; }
.lang { width: 34px; text-align: center; line-height: 39px; }
.clock { width: 74px; text-align: center; line-height: 18px; padding-top: 2px; box-sizing: border-box; }
.peek { width: 15px; box-sizing: border-box; background: linear-gradient(90deg, transparent 10px, #5a7475 10px 11px, transparent 11px); }
</style>
